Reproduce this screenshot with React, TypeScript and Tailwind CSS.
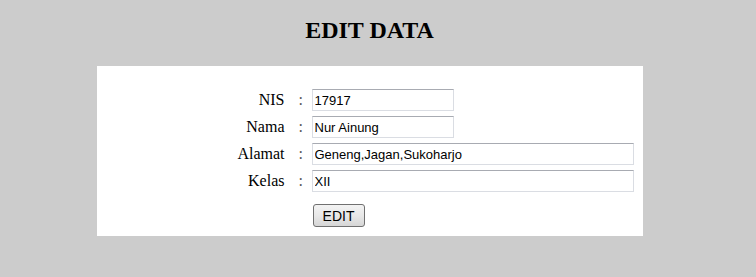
const fields = [
  { label: "NIS", value: "17917", width: "w-[142px]" },
  { label: "Nama", value: "Nur Ainung", width: "w-[142px]" },
  { label: "Alamat", value: "Geneng,Jagan,Sukoharjo", width: "w-[322px]" },
  { label: "Kelas", value: "XII", width: "w-[322px]" },
];

export default function App() {
  return (
    <div className="min-h-screen w-full bg-[#cccccc]">
      <div className="w-[739px] flex flex-col items-center">
        <h1 className="mt-[16px] mb-[22px] text-[24px] leading-[28px] font-bold text-black [font-family:'Liberation_Serif',serif]">
          EDIT DATA
        </h1>
        <div className="w-[546px] h-[170px] bg-white pt-[23px]">
          <div className="grid grid-cols-[188px_27px_auto] gap-y-[5px] [font-family:'Liberation_Serif',serif] text-[16px] text-black">
            {fields.map((f) => (
              <div key={f.label} className="contents">
                <div className="h-[22px] flex items-center justify-end leading-none">{f.label}</div>
                <div className="h-[22px] flex items-center pl-[14px] leading-none text-[#555]">:</div>
                <div className="h-[22px]">
                  <input
                    readOnly
                    value={f.value}
                    className={`block ${f.width} h-[22px] border border-[#dadde3] border-t-[#a8abb2] bg-white px-[2px] text-[13px] text-black outline-none [font-family:'Liberation_Sans',sans-serif]`}
                  />
                </div>
              </div>
            ))}
            <div />
            <div />
            <div className="pt-[7px]">
              <button className="block ml-px w-[52px] h-[23px] rounded-[3px] border border-[#707070] bg-gradient-to-b from-[#f3f3f3] via-[#e8e8e8] to-[#d6d6d6] text-[14px] text-black leading-none [font-family:'Liberation_Sans',sans-serif]">
                EDIT
              </button>
            </div>
          </div>
        </div>
      </div>
    </div>
  );
}
